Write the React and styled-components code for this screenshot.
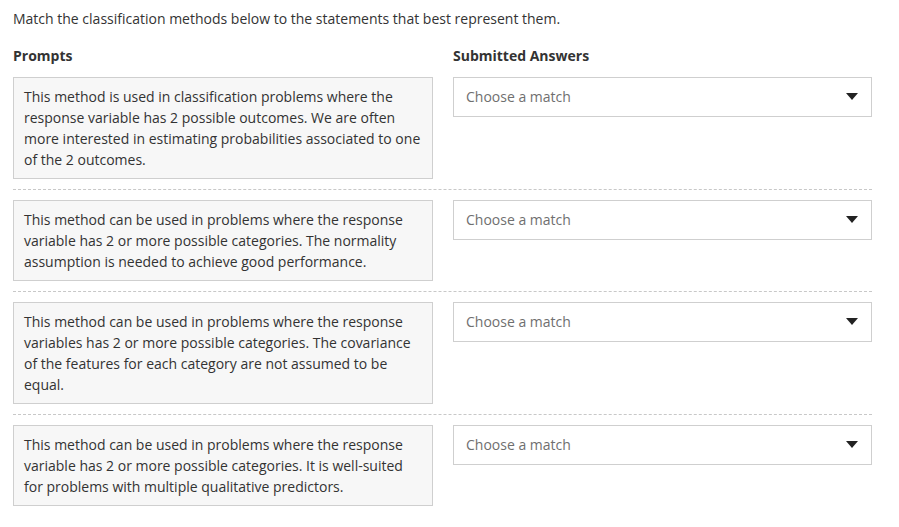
import React from 'react';
import styled, { createGlobalStyle } from 'styled-components';

const GlobalStyle = createGlobalStyle`
    body {
        margin: 0;
        background: #fff;
        font-family: "Open Sans", "Liberation Sans", sans-serif;
        font-size: 14px;
        line-height: 21px;
        color: #333;
    }
`;

const prompts = [
    'This method is used in classification problems where the response variable has 2 possible outcomes. We are often more interested in estimating probabilities associated to one of the 2 outcomes.',
    'This method can be used in problems where the response variable has 2 or more possible categories. The normality assumption is needed to achieve good performance.',
    'This method can be used in problems where the response variables has 2 or more possible categories. The covariance of the features for each category are not assumed to be equal.',
    'This method can be used in problems where the response variable has 2 or more possible categories. It is well-suited for problems with multiple qualitative predictors.',
];

const Wrapper = styled.div`
    width: 859px;
    padding: 8px 0 0 13px;
`;

const Intro = styled.p`
    margin: 0 0 16px;
`;

const Columns = styled.div`
    display: grid;
    grid-template-columns: 420px 1fr;
    column-gap: 20px;
    align-items: start;
`;

// each prompt/answer pair, split from the next one by a dashed rule
const Row = styled(Columns)`
    padding: ${props => (props.first ? '0 0 10px' : '10px 0')};
    border-bottom: ${props => (props.last ? 'none' : '1px dashed #c8c8c8')};
`;

const Heading = styled.div`
    font-weight: 700;
    margin-bottom: 11px;
`;

const Prompt = styled.div`
    background: #f7f7f7;
    border: 1px solid #cfcfcf;
    padding: 8px 10px;
`;

const Select = styled.div`
    display: flex;
    align-items: center;
    justify-content: space-between;
    box-sizing: border-box;
    height: 40px;
    border: 1px solid #cfcfcf;
    background: #fff;
    padding: 0 13px 2px 12px;
    color: #6f6f6f;
`;

const CaretSvg = styled.svg`
    margin-top: 1px;
`;

const Caret = () => (
    <CaretSvg width="12" height="7" viewBox="0 0 12 7">
        <path d="M0 0h12L6 7z" fill="#222" />
    </CaretSvg>
);

const App = () => {
    return (
        <Wrapper>
            <GlobalStyle />
            <Intro>Match the classification methods below to the statements that best represent them.</Intro>
            <Columns>
                <Heading>Prompts</Heading>
                <Heading>Submitted Answers</Heading>
            </Columns>
            {prompts.map((text, index) => (
                <Row key={index} first={index === 0} last={index === prompts.length - 1}>
                    <Prompt>{text}</Prompt>
                    <Select>
                        <span>Choose a match</span>
                        <Caret />
                    </Select>
                </Row>
            ))}
        </Wrapper>
    );
};

export default App;
